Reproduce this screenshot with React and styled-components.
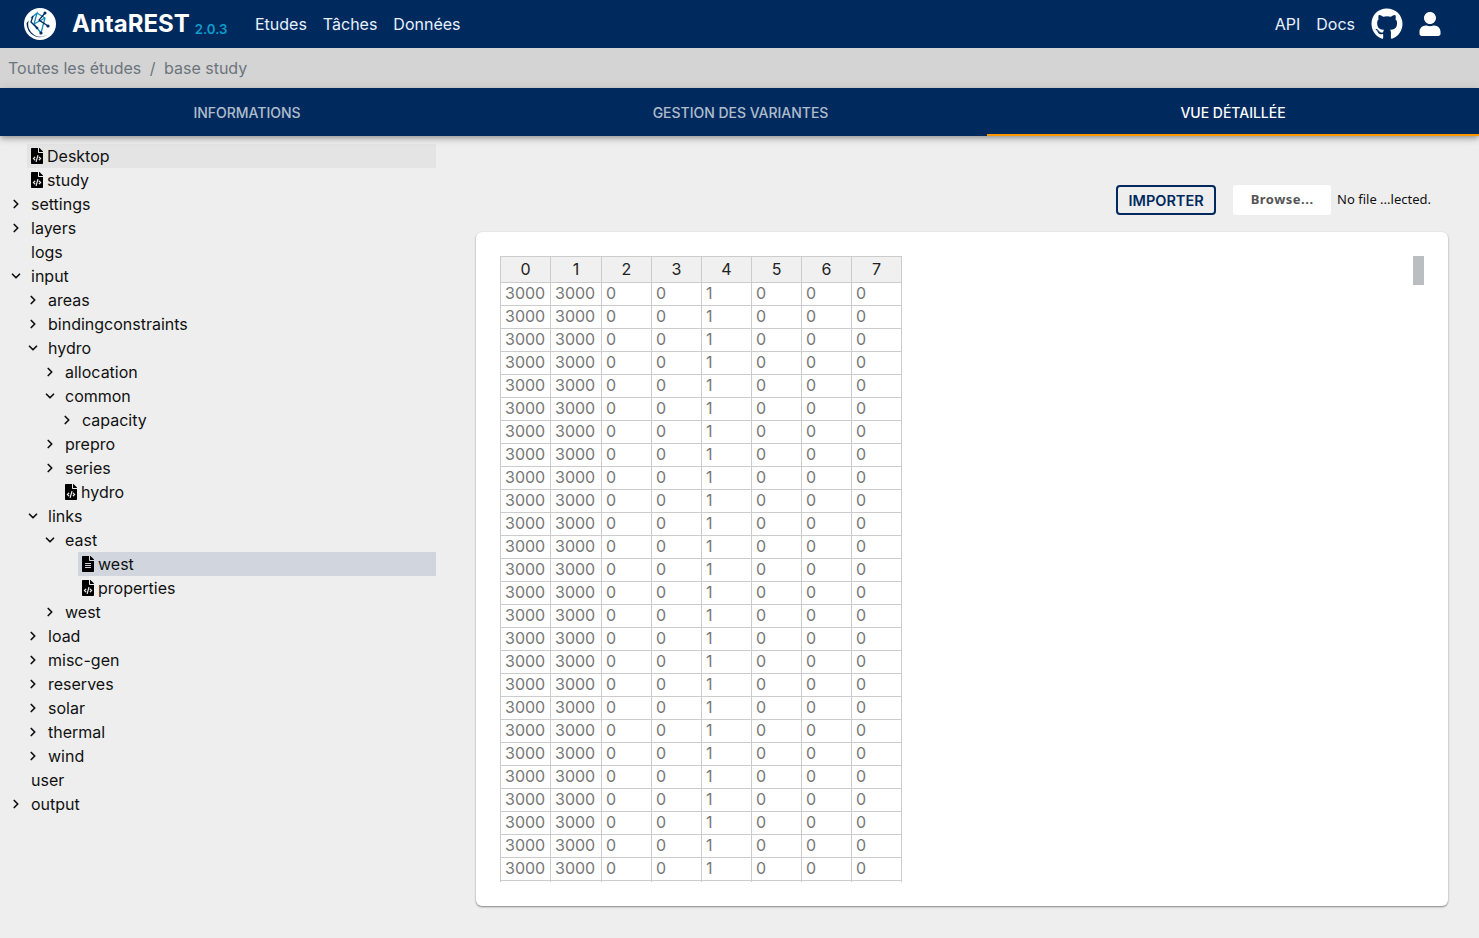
import React from 'react';
import styled, { createGlobalStyle } from 'styled-components';
import { FaGithub, FaUser, FaFileCode, FaFileAlt } from 'react-icons/fa';
import { ChevronRight, ChevronDown } from 'lucide-react';

const Global = createGlobalStyle`
  html, body { margin: 0; padding: 0; height: 100%; }
  body { font-family: Inter, "Liberation Sans", sans-serif; font-size: 16px; background: #eee; color: #000; overflow: hidden; }
  * { box-sizing: border-box; }
`;

const Page = styled.div`
  width: 1479px; height: 938px; display: flex; flex-direction: column; background: #eee; overflow: hidden;
`;
const Header = styled.header`
  height: 48px; background: #002a5e; display: flex; align-items: center; padding: 0 33px 0 24px; color: #fff; flex: none;
`;
const Logo = styled.svg`width: 32px; height: 32px; flex: none;`;
const Brand = styled.span`
  margin-left: 16px; font-size: 24px; font-weight: 700; line-height: 32px;
`;
const Version = styled.span`
  margin-left: 5px; font-size: 13.2px; font-weight: 600; color: #0e9ccb; align-self: flex-end; line-height: 16px; margin-bottom: 11px;
`;
const NavGroup = styled.nav`display: flex; gap: 16px; margin-left: 27.5px;`;
const NavLink = styled.span`color: #e8f1ff; line-height: 24px;`;
const Right = styled.div`margin-left: auto; display: flex; align-items: center;`;
const GitIcon = styled(FaGithub)`width: 32px; height: 32px; margin-left: 16px; color: #fff;`;
const UserIcon = styled(FaUser)`width: 22px; height: 24px; margin-left: 16px; margin-right: 5px; color: #fff;`;

const Crumbs = styled.div`
  height: 40px; background: #d4d4d4; display: flex; align-items: center; padding-left: 8px; color: #6c757d; flex: none; gap: 8.5px;
`;
const Tabs = styled.div`
  height: 48px; background: #002a5e; display: grid; grid-template-columns: 494px 493px 492px; flex: none;
  box-shadow: 0 2px 4px -1px rgba(0,0,0,.2), 0 4px 5px 0 rgba(0,0,0,.14), 0 1px 10px 0 rgba(0,0,0,.12);
  position: relative; z-index: 1;
`;
const Tab = styled.div`
  display: flex; align-items: center; justify-content: center; font-size: 14px; font-weight: 500; letter-spacing: -.02px; position: relative;
  color: ${p => p.$active ? '#fff' : 'rgba(255,255,255,.7)'};
  text-transform: uppercase;
  &::after {
    content: ''; position: absolute; left: 0; right: 0; bottom: 0; height: 2px;
    background: ${p => p.$active ? '#ff9800' : 'transparent'};
  }
`;
const Body = styled.div`flex: 1; display: flex; min-height: 0;`;
const Tree = styled.div`width: 436px; flex: none; padding-top: 8px; display: flex; flex-direction: column;`;
const Row = styled.div`
  height: 24px; display: flex; align-items: center; line-height: 24px; color: #111;
  padding-left: ${p => 31 + p.$level * 17}px; position: relative;
`;
const FileRow = styled(Row)`
  margin-left: ${p => 27 + p.$level * 17}px; padding-left: 4px;
  background: ${p => p.$selected ? '#d0d5de' : p.$hover ? '#e4e4e4' : 'transparent'};
`;
const Caret = styled.span`
  position: absolute; left: ${p => 9 + p.$level * 17}px; top: 5px; width: 14px; height: 14px; display: flex; color: #111;
`;
const FileIcon = styled.span`width: 12px; height: 16px; display: flex; margin-right: 4px; color: #000; svg { width: 12px; height: 16px; }`;

const Main = styled.div`flex: 1; display: flex; flex-direction: column; padding: 49px 31px 32px 40px;`;
const Actions = styled.div`display: flex; align-items: center; height: 30px; margin-bottom: 17px; justify-content: flex-end; padding-right: 17px;`;
const ImportBtn = styled.button`
  width: 100px; height: 30px; border: 2px solid #002a5e; border-radius: 4px; background: transparent; color: #002a5e;
  font-family: Inter, sans-serif; font-size: 14.5px; font-weight: 600; padding: 0; margin-right: 17px;
`;
const Browse = styled.div`
  width: 98px; height: 30px; background: #fff; border-radius: 2px; color: #555; display: flex; align-items: center; justify-content: center;
  font-family: "Noto Sans", sans-serif; font-size: 13px; font-weight: 700; letter-spacing: .5px; padding-bottom: 2px;
`;
const NoFile = styled.span`margin-left: 6px; font-family: "Noto Sans", sans-serif; font-size: 13px; color: #111; line-height: 16px; padding-bottom: 2px;`;
const Card = styled.div`
  flex: 1; background: #fff; border-radius: 6px; box-shadow: 0 1px 2px rgba(0,0,0,.45); padding: 24px; position: relative;
`;
const TableWrap = styled.div`height: 626px; overflow: hidden;`;
const Table = styled.table`
  border-collapse: collapse; table-layout: fixed; width: 402px; font-size: 16px;
`;
const Th = styled.th`
  height: 26px; border: 1px solid #ccc; background: #f0f0f0; font-weight: 400; color: #222; text-align: center; padding: 0 0 2px; line-height: 22px;
  width: ${p => p.$w}px;
`;
const Td = styled.td`
  height: 23px; border: 1px solid #ccc; color: #777; padding: 0 4px 2px; line-height: 20px; white-space: nowrap;
`;
const Thumb = styled.div`position: absolute; left: 937px; top: 24px; width: 11px; height: 29px; background: #bbbec1;`;

function GlobeLogo() {
  return (
    <Logo viewBox="0 0 32 32">
      <circle cx="16" cy="16" r="16" fill="#fff" />
      <path d="M2.6 15a13.4 13.4 0 0 0 23.6 9.4a12.5 12.5 0 0 1-21.4-12z" fill="#002a5e" />
      <g stroke="#1689b4" strokeWidth="1.3" fill="none">
        <path d="M7 10L13 5L10 16L17 25M13 5L21 10L17 25M10 16L21 10" />
      </g>
      <g stroke="#002a5e" strokeWidth="1.3" fill="none">
        <path d="M21 5L15 12L24 18M9 8L7 14L13 20" />
      </g>
      <g fill="#002a5e">
        <circle cx="21" cy="5" r="1.5" /><circle cx="24" cy="18" r="1.6" /><circle cx="17" cy="25" r="1.6" /><circle cx="13" cy="20" r="1.3" />
      </g>
    </Logo>
  );
}

const tree = [
  ['f', 0, 'Desktop', 'code', 'hover'],
  ['f', 0, 'study', 'code'],
  ['c', 0, 'settings'],
  ['c', 0, 'layers'],
  ['n', 0, 'logs'],
  ['o', 0, 'input'],
  ['c', 1, 'areas'],
  ['c', 1, 'bindingconstraints'],
  ['o', 1, 'hydro'],
  ['c', 2, 'allocation'],
  ['o', 2, 'common'],
  ['c', 3, 'capacity'],
  ['c', 2, 'prepro'],
  ['c', 2, 'series'],
  ['f', 2, 'hydro', 'code'],
  ['o', 1, 'links'],
  ['o', 2, 'east'],
  ['f', 3, 'west', 'text', 'selected'],
  ['f', 3, 'properties', 'code'],
  ['c', 2, 'west'],
  ['c', 1, 'load'],
  ['c', 1, 'misc-gen'],
  ['c', 1, 'reserves'],
  ['c', 1, 'solar'],
  ['c', 1, 'thermal'],
  ['c', 1, 'wind'],
  ['n', 0, 'user'],
  ['c', 0, 'output'],
];

const widths = [50, 51, 50, 50, 50, 50, 50, 50];
const row = ['3000', '3000', '0', '0', '1', '0', '0', '0'];

export default function App() {
  return (
    <Page>
      <Global />
      <Header>
        <GlobeLogo />
        <Brand>AntaREST</Brand>
        <Version>2.0.3</Version>
        <NavGroup>
          <NavLink>Etudes</NavLink>
          <NavLink>Tâches</NavLink>
          <NavLink>Données</NavLink>
        </NavGroup>
        <Right>
          <NavGroup>
            <NavLink>API</NavLink>
            <NavLink>Docs</NavLink>
          </NavGroup>
          <GitIcon />
          <UserIcon />
        </Right>
      </Header>
      <Crumbs><span>Toutes les études</span><span>/</span><span>base study</span></Crumbs>
      <Tabs>
        <Tab>Informations</Tab>
        <Tab>Gestion des variantes</Tab>
        <Tab $active>Vue détaillée</Tab>
      </Tabs>
      <Body>
        <Tree>
          {tree.map(([kind, level, label, icon, state], i) =>
            kind === 'f' ? (
              <FileRow key={i} $level={level} $selected={state === 'selected'} $hover={state === 'hover'}>
                <FileIcon>{icon === 'code' ? <FaFileCode /> : <FaFileAlt />}</FileIcon>
                {label}
              </FileRow>
            ) : (
              <Row key={i} $level={level}>
                {kind === 'c' && <Caret $level={level}><ChevronRight size={14} strokeWidth={3} /></Caret>}
                {kind === 'o' && <Caret $level={level}><ChevronDown size={14} strokeWidth={3} /></Caret>}
                {label}
              </Row>
            )
          )}
        </Tree>
        <Main>
          <Actions>
            <ImportBtn>IMPORTER</ImportBtn>
            <Browse>Browse...</Browse>
            <NoFile>No file ...lected.</NoFile>
          </Actions>
          <Card>
            <TableWrap>
              <Table>
                <thead>
                  <tr>{widths.map((w, i) => <Th key={i} $w={w}>{i}</Th>)}</tr>
                </thead>
                <tbody>
                  {Array.from({ length: 26 }).map((_, r) => (
                    <tr key={r}>{row.map((v, c) => <Td key={c}>{v}</Td>)}</tr>
                  ))}
                  <tr>{row.map((_, c) => <Td key={c} />)}</tr>
                </tbody>
              </Table>
            </TableWrap>
            <Thumb />
          </Card>
        </Main>
      </Body>
    </Page>
  );
}
